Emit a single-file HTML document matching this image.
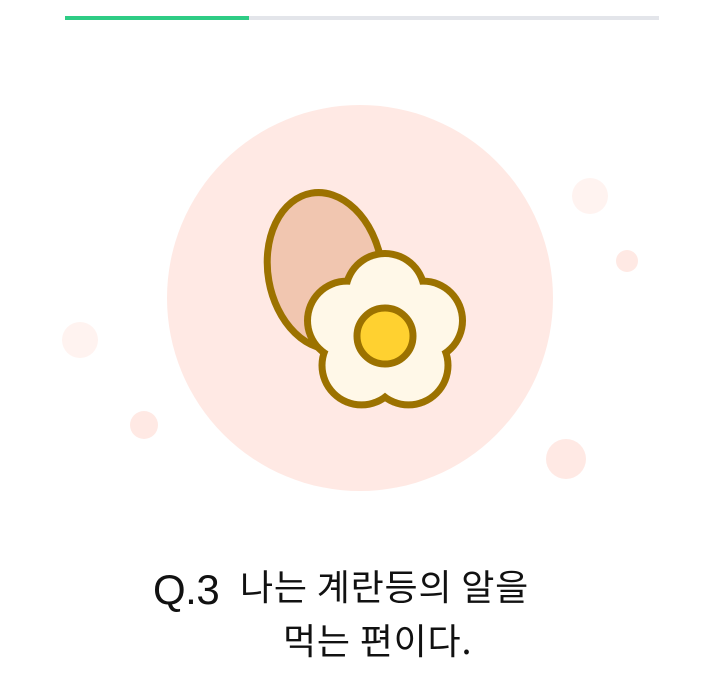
<!DOCTYPE html>
<html><head><meta charset="utf-8"><style>
html,body{margin:0;padding:0;background:#fff;width:724px;height:700px;overflow:hidden;position:relative}
.t{position:absolute;font-family:"Liberation Sans","Noto Sans CJK KR",sans-serif;color:#111;white-space:nowrap;line-height:1}
.k{font-family:"Noto Sans CJK KR","Liberation Sans",sans-serif;letter-spacing:0.8px}
</style></head><body>
<div style="position:absolute;left:65px;top:16px;width:594px;height:4px;background:#e3e5ea"></div>
<div style="position:absolute;left:65px;top:16px;width:184px;height:4px;background:#2ecc85"></div>
<svg width="724" height="560" style="position:absolute;left:0;top:0">
<circle cx="360" cy="298" r="193" fill="#ffe9e4"/>
<circle cx="590" cy="196" r="18" fill="#fff3f0"/>
<circle cx="627" cy="261" r="11" fill="#ffe9e4"/>
<circle cx="80" cy="340" r="18" fill="#fff3f0"/>
<circle cx="144" cy="425" r="14" fill="#ffe9e4"/>
<circle cx="566" cy="459" r="20" fill="#ffe9e4"/>
<ellipse cx="325" cy="271" rx="57" ry="79" transform="rotate(-10 325 271)" fill="#f1c6b0" stroke="#9c7200" stroke-width="7"/>
<g fill="#9c7200">
<circle cx="385" cy="333" r="63"/><circle cx="385" cy="293" r="43"/><circle cx="423" cy="320.6" r="43"/><circle cx="408.5" cy="365.4" r="43"/><circle cx="361.5" cy="365.4" r="43"/><circle cx="347" cy="320.6" r="43"/>
</g>
<g fill="#fff8e8">
<circle cx="385" cy="333" r="56"/><circle cx="385" cy="293" r="36"/><circle cx="423" cy="320.6" r="36"/><circle cx="408.5" cy="365.4" r="36"/><circle cx="361.5" cy="365.4" r="36"/><circle cx="347" cy="320.6" r="36"/>
</g>
<circle cx="385" cy="336" r="28" fill="#ffd130" stroke="#9c7200" stroke-width="7"/>
</svg>
<div class="t" style="left:153px;top:569px;font-size:42px;letter-spacing:-0.5px">Q.3</div>
<div class="t k" style="left:240px;top:567px;font-size:36px">나는 계란등의 알을</div>
<div class="t k" style="left:283px;top:621px;font-size:36px">먹는 편이다.</div>
</body></html>
